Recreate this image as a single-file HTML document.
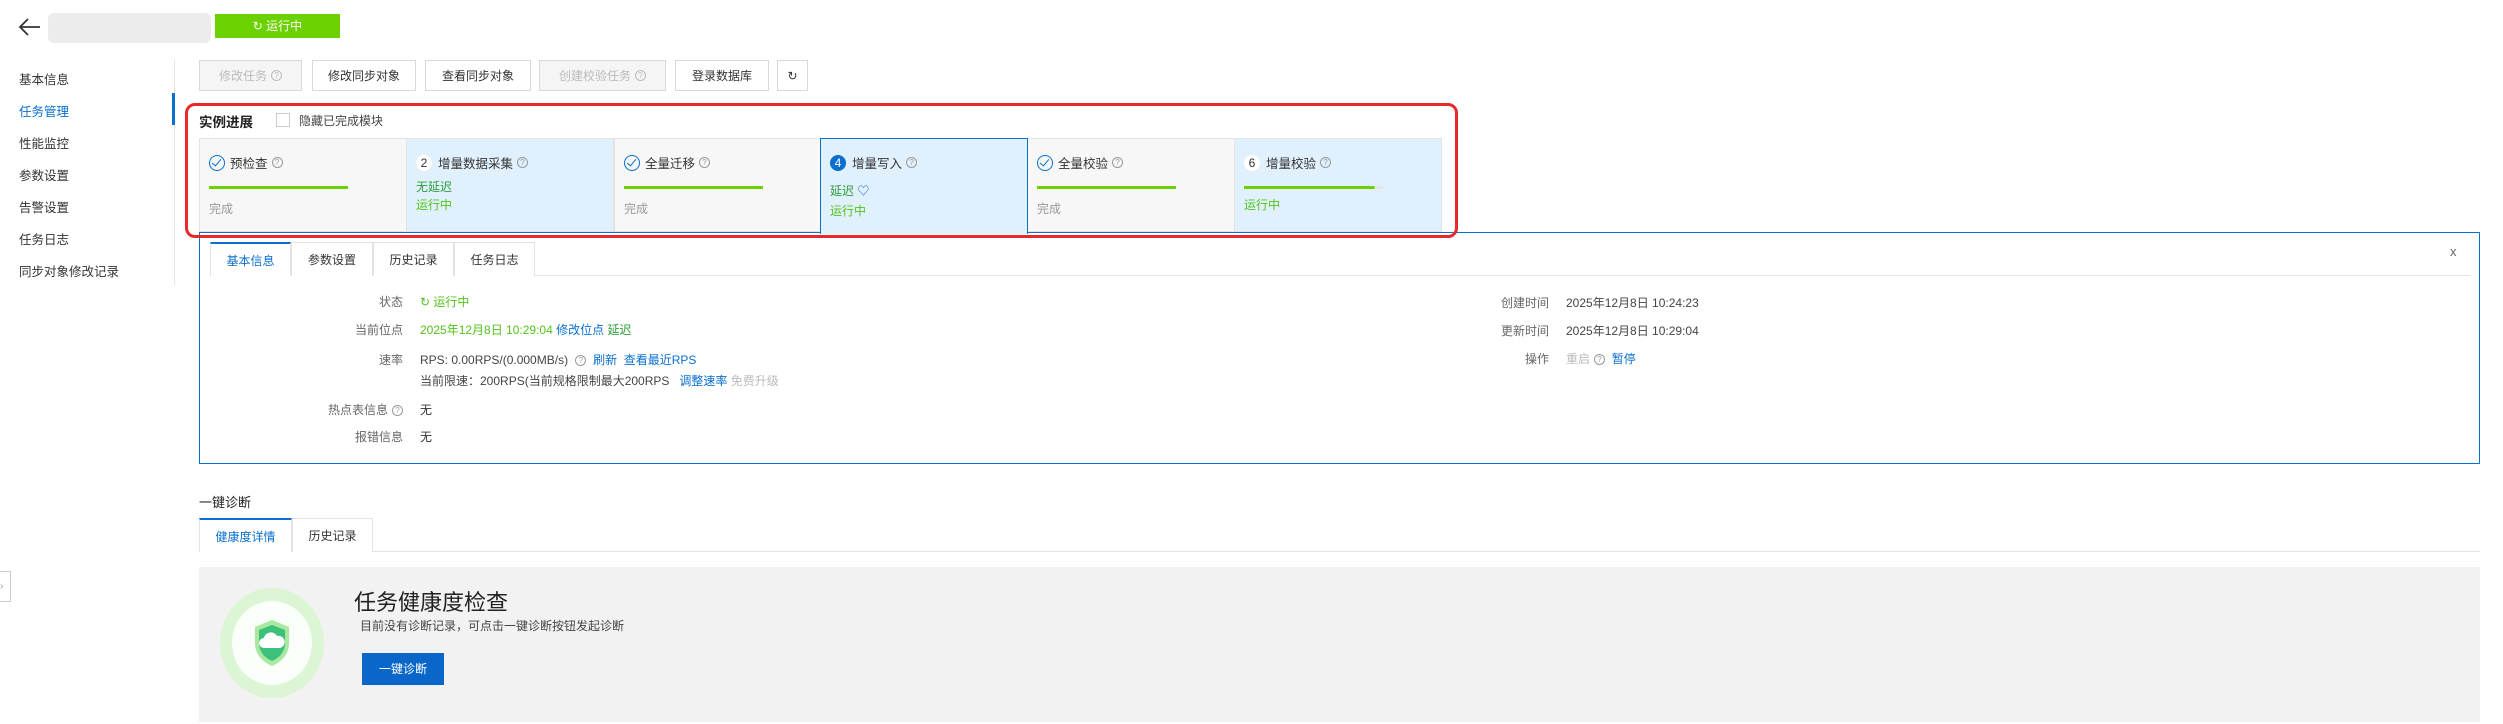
<!DOCTYPE html>
<html><head><meta charset="utf-8"><style>
*{box-sizing:border-box;margin:0;padding:0}
body{width:2503px;height:724px;background:#fff;position:relative;overflow:hidden;font-family:"Liberation Sans","Noto Sans CJK SC",sans-serif;font-size:12px;color:#333}
.a{position:absolute;white-space:nowrap}
.side{font-size:12.5px;color:#333}
.btn{position:absolute;top:60px;height:31px;border:1px solid #d9d9d9;background:#fff;font-size:12px;color:#333;display:flex;align-items:center;justify-content:center}
.btn.dis{background:#f5f5f5;color:#bbb}
.q{display:inline-block;width:11px;height:11px;border:1px solid #999;border-radius:50%;font-size:8px;line-height:9px;text-align:center;color:#999;vertical-align:middle;margin-left:4px}
.card{position:absolute;top:138px;height:94px;width:208px;border:1px solid #e3e3e3;background:#f7f7f7}
.card.b{background:#e1f0fd}
.ct{position:absolute;left:9px;top:14px;font-size:12.5px;color:#333;display:flex;align-items:center}
.chk{width:16px;height:16px;border:1.5px solid #0a6fd0;border-radius:50%;margin-right:5px;position:relative}
.chk:after{content:"";position:absolute;left:4px;top:1px;width:4px;height:8px;border:solid #0a6fd0;border-width:0 1.5px 1.5px 0;transform:rotate(40deg)}
.num{width:16px;height:16px;border-radius:50%;background:#fff;font-size:12px;text-align:center;line-height:16px;margin-right:6px}
.bar{position:absolute;left:9px;top:47px;width:139px;height:3px;background:#6cd100}
.done{position:absolute;left:9px;top:61px;color:#999;font-size:12px}
.g{color:#52c41a}.dg{color:#2a9d3a}.bl{color:#0a6fd0}
.tab{position:absolute;height:34px;border:1px solid #e3e3e3;border-bottom:none;background:#fff;font-size:12px;display:flex;align-items:center;justify-content:center}
.tab.act{border-top:2px solid #0a6fd0;color:#0a6fd0}
.lb{position:absolute;text-align:right;color:#666;font-size:12px;white-space:nowrap}
</style></head><body>
<!-- header -->
<svg class="a" style="left:18px;top:17px" width="24" height="20" viewBox="0 0 24 20"><path d="M22 10H3M10 2L2 10l8 8" stroke="#333" stroke-width="1.8" fill="none"/></svg>
<div class="a" style="left:48px;top:13px;width:163px;height:30px;background:#ececec;border-radius:6px"></div>
<div class="a" style="left:215px;top:14px;width:125px;height:24px;background:#6cd100;color:#fff;font-size:12px;line-height:24px;text-align:center">↻ 运行中</div>
<!-- sidebar -->
<div class="a side" style="left:19px;top:69px">基本信息</div>
<div class="a side" style="left:19px;top:101px;color:#0a6fd0">任务管理</div>
<div class="a side" style="left:19px;top:133px">性能监控</div>
<div class="a side" style="left:19px;top:165px">参数设置</div>
<div class="a side" style="left:19px;top:197px">告警设置</div>
<div class="a side" style="left:19px;top:229px">任务日志</div>
<div class="a side" style="left:19px;top:261px">同步对象修改记录</div>
<div class="a" style="left:174px;top:60px;width:1px;height:225px;background:#e5e5e5"></div>
<div class="a" style="left:172px;top:93px;width:3px;height:32px;background:#0a6fd0"></div>
<div class="a" style="left:0;top:571px;width:11px;height:31px;border:1px solid #ccc;border-left:none;background:#fff;color:#999;font-size:10px;line-height:29px">›</div>
<!-- buttons -->
<div class="btn dis" style="left:199px;width:103px">修改任务<span class="q" style="border-color:#bbb;color:#bbb">?</span></div>
<div class="btn" style="left:312px;width:104px">修改同步对象</div>
<div class="btn" style="left:425px;width:106px">查看同步对象</div>
<div class="btn dis" style="left:539px;width:127px">创建校验任务<span class="q" style="border-color:#bbb;color:#bbb">?</span></div>
<div class="btn" style="left:675px;width:94px">登录数据库</div>
<div class="btn" style="left:777px;width:31px">↻</div>
<!-- progress -->
<div class="a" style="left:199px;top:111px;font-size:13.5px;font-weight:bold;color:#222">实例进展</div>
<div class="a" style="left:276px;top:113px;width:14px;height:14px;border:1px solid #ccc;background:#fff"></div>
<div class="a" style="left:299px;top:112px;font-size:12px;color:#444">隐藏已完成模块</div>
<div class="card" style="left:199px"><div class="ct"><span class="chk"></span>预检查<span class="q">?</span></div><div class="bar"></div><div class="done">完成</div></div>
<div class="card b" style="left:406px"><div class="ct"><span class="num">2</span>增量数据采集<span class="q">?</span></div><div class="a dg" style="left:9px;top:39px">无延迟</div><div class="a g" style="left:9px;top:57px">运行中</div></div>
<div class="card" style="left:614px"><div class="ct"><span class="chk"></span>全量迁移<span class="q">?</span></div><div class="bar"></div><div class="done">完成</div></div>
<div class="card b" style="left:820px;border:1.5px solid #0a6fd0;border-bottom:none;height:96px;z-index:2"><div class="ct"><span class="num" style="background:#0a6fd0;color:#fff">4</span>增量写入<span class="q">?</span></div><div class="a dg" style="left:9px;top:43px">延迟 <span class="bl">♡</span></div><div class="a g" style="left:9px;top:63px">运行中</div></div>
<div class="card" style="left:1027px"><div class="ct"><span class="chk"></span>全量校验<span class="q">?</span></div><div class="bar"></div><div class="done">完成</div></div>
<div class="card b" style="left:1234px"><div class="ct"><span class="num">6</span>增量校验<span class="q">?</span></div><div class="bar" style="width:139px;background:linear-gradient(90deg,#6cd100 94%,#e6e6e6 94%)"></div><div class="a g" style="left:9px;top:57px">运行中</div></div>
<div class="a" style="left:185px;top:103px;width:1273px;height:135px;border:3px solid #e8282b;border-radius:10px;z-index:3"></div>
<!-- detail -->
<div class="a" style="left:199px;top:232px;width:2281px;height:232px;border:1.5px solid #0a6fd0"></div>
<div class="a" style="left:210px;top:275px;width:2260px;height:1px;background:#e3e3e3"></div>
<div class="tab act" style="left:210px;top:242px;width:81px">基本信息</div>
<div class="tab" style="left:291px;top:242px;width:82px">参数设置</div>
<div class="tab" style="left:373px;top:242px;width:81px">历史记录</div>
<div class="tab" style="left:454px;top:242px;width:81px">任务日志</div>
<div class="a" style="left:2450px;top:244px;color:#666;font-size:13px">x</div>
<div class="lb" style="right:2100px;top:293px">状态</div>
<div class="a g" style="left:420px;top:293px">↻ 运行中</div>
<div class="lb" style="right:2100px;top:321px">当前位点</div>
<div class="a" style="left:420px;top:321px"><span class="g">2025年12月8日 10:29:04</span> <span class="bl">修改位点</span> <span class="dg">延迟</span></div>
<div class="lb" style="right:2100px;top:351px">速率</div>
<div class="a" style="left:420px;top:351px;color:#444">RPS: 0.00RPS/(0.000MB/s) <span class="q">?</span> <span class="bl">&nbsp;刷新 &nbsp;查看最近RPS</span></div>
<div class="a" style="left:420px;top:372px;color:#444">当前限速：200RPS(当前规格限制最大200RPS &nbsp;&nbsp;<span class="bl">调整速率</span> <span style="color:#bbb">免费升级</span></div>
<div class="lb" style="right:2100px;top:401px">热点表信息<span class="q">?</span></div>
<div class="a" style="left:420px;top:401px">无</div>
<div class="lb" style="right:2100px;top:428px">报错信息</div>
<div class="a" style="left:420px;top:428px">无</div>
<div class="lb" style="right:954px;top:294px">创建时间</div>
<div class="a" style="left:1566px;top:294px;color:#444">2025年12月8日 10:24:23</div>
<div class="lb" style="right:954px;top:322px">更新时间</div>
<div class="a" style="left:1566px;top:322px;color:#444">2025年12月8日 10:29:04</div>
<div class="lb" style="right:954px;top:350px">操作</div>
<div class="a" style="left:1566px;top:350px"><span style="color:#bbb">重启</span><span class="q">?</span> &nbsp;<span class="bl">暂停</span></div>
<!-- diagnosis -->
<div class="a" style="left:199px;top:492px;font-size:13px;color:#222">一键诊断</div>
<div class="a" style="left:199px;top:551px;width:2281px;height:1px;background:#e3e3e3"></div>
<div class="tab act" style="left:199px;top:518px;width:93px;height:34px">健康度详情</div>
<div class="tab" style="left:292px;top:518px;width:81px;height:34px">历史记录</div>
<div class="a" style="left:199px;top:567px;width:2281px;height:155px;background:#f2f2f2"></div>
<div class="a" style="left:220px;top:588px;width:104px;height:110px;border-radius:50%;background:#dcf5d4"></div>
<div class="a" style="left:232px;top:601px;width:80px;height:84px;border-radius:50%;background:#fafffa"></div>
<svg class="a" style="left:252px;top:618px" width="40" height="50" viewBox="0 0 40 50"><path d="M20 2L37 9v16c0 12-8 19-17 23C11 44 3 37 3 25V9z" fill="#a8e8a0"/><path d="M20 7L33 12v13c0 9-6 15-13 18C13 40 7 34 7 25V12z" fill="#3cc07a"/><path d="M12 30a5 5 0 010-10 7 7 0 0113-2 5 5 0 013 12z" fill="#fff"/></svg>
<div class="a" style="left:354px;top:585px;font-size:22px;color:#222">任务健康度检查</div>
<div class="a" style="left:360px;top:617px;font-size:12px;color:#444">目前没有诊断记录，可点击一键诊断按钮发起诊断</div>
<div class="a" style="left:362px;top:653px;width:82px;height:32px;background:#0a66c8;color:#fff;font-size:12px;line-height:32px;text-align:center">一键诊断</div>
</body></html>
